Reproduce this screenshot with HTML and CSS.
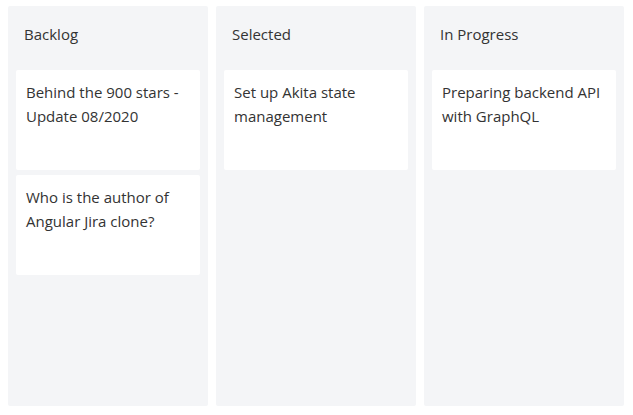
FILE: index.html
```html
<!DOCTYPE html>
<html lang="en">
<head>
<meta charset="utf-8">
<title>Board</title>
<link rel="stylesheet" href="styles.css">
</head>
<body>
<div class="board">
  <section class="lane">
    <h2 class="lane-title">Backlog</h2>
    <div class="cards">
      <div class="card">Behind the 900 stars - Update 08/2020</div>
      <div class="card">Who is the author of Angular Jira clone?</div>
    </div>
  </section>
  <section class="lane">
    <h2 class="lane-title">Selected</h2>
    <div class="cards">
      <div class="card">Set up Akita state management</div>
    </div>
  </section>
  <section class="lane">
    <h2 class="lane-title">In Progress</h2>
    <div class="cards">
      <div class="card">Preparing backend API with GraphQL</div>
    </div>
  </section>
</div>
</body>
</html>
```
FILE: styles.css
```css
html, body {
  margin: 0;
  padding: 0;
  background: #ffffff;
}
body {
  font-family: "Open Sans", "Noto Sans", "Liberation Sans", sans-serif;
  color: #333333;
}
.board {
  display: flex;
  gap: 8px;
  padding: 6px 8px 0 8px;
}
.lane {
  width: 200px;
  height: 400px;
  background: #f4f5f7;
  border-radius: 2px;
  box-sizing: border-box;
}
.lane-title {
  margin: 0 0 24px 0;
  padding: 16px 16px 0 16px;
  font-size: 15px;
  font-weight: 400;
  line-height: 24px;
  height: 24px;
}
.cards {
  display: flex;
  flex-direction: column;
  gap: 5px;
  padding: 0 8px;
}
.card {
  background: #ffffff;
  height: 100px;
  box-sizing: border-box;
  padding: 10px 10px;
  font-size: 15px;
  line-height: 24px;
  border-radius: 2px;
}
```
